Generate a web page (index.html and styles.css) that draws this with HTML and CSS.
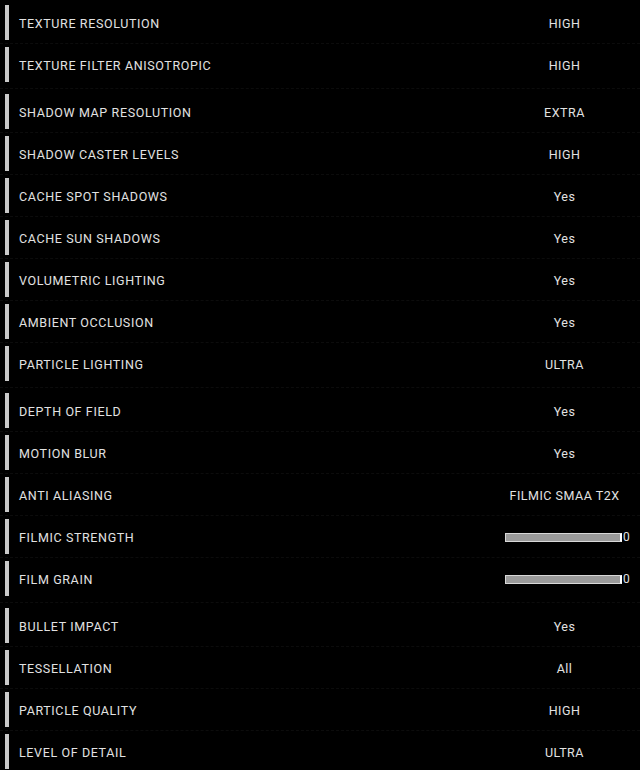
FILE: index.html
```html
<!DOCTYPE html>
<html lang="en">
<head>
    <meta charset="UTF-8">
    <meta name="viewport" content="width=device-width, initial-scale=1.0">
    <title>Advanced Graphics</title>
    <link rel="stylesheet" href="styles.css">
</head>
<body>
    <div class="settings">
        <div class="group">
            <div class="row"><span class="label">TEXTURE RESOLUTION</span><span class="value">HIGH</span></div>
            <div class="row"><span class="label">TEXTURE FILTER ANISOTROPIC</span><span class="value">HIGH</span></div>
        </div>

        <div class="group">
            <div class="row"><span class="label">SHADOW MAP RESOLUTION</span><span class="value">EXTRA</span></div>
            <div class="row"><span class="label">SHADOW CASTER LEVELS</span><span class="value">HIGH</span></div>
            <div class="row"><span class="label">CACHE SPOT SHADOWS</span><span class="value">Yes</span></div>
            <div class="row"><span class="label">CACHE SUN SHADOWS</span><span class="value">Yes</span></div>
            <div class="row"><span class="label">VOLUMETRIC LIGHTING</span><span class="value">Yes</span></div>
            <div class="row"><span class="label">AMBIENT OCCLUSION</span><span class="value">Yes</span></div>
            <div class="row"><span class="label">PARTICLE LIGHTING</span><span class="value">ULTRA</span></div>
        </div>

        <div class="group">
            <div class="row"><span class="label">DEPTH OF FIELD</span><span class="value">Yes</span></div>
            <div class="row"><span class="label">MOTION BLUR</span><span class="value">Yes</span></div>
            <div class="row"><span class="label">ANTI ALIASING</span><span class="value">FILMIC SMAA T2X</span></div>
            <div class="row">
                <span class="label">FILMIC STRENGTH</span>
                <span class="value slider-value"><span class="slider"></span><span class="num">0</span></span>
            </div>
            <div class="row">
                <span class="label">FILM GRAIN</span>
                <span class="value slider-value"><span class="slider"></span><span class="num">0</span></span>
            </div>
        </div>

        <div class="group">
            <div class="row"><span class="label">BULLET IMPACT</span><span class="value">Yes</span></div>
            <div class="row"><span class="label">TESSELLATION</span><span class="value">All</span></div>
            <div class="row"><span class="label">PARTICLE QUALITY</span><span class="value">HIGH</span></div>
            <div class="row"><span class="label">LEVEL OF DETAIL</span><span class="value">ULTRA</span></div>
        </div>
    </div>
</body>
</html>
```

FILE: styles.css
```css
html, body {
    margin: 0;
    padding: 0;
    background-color: #000;
}
body {
    font-family: Roboto, "Liberation Sans", Arial, sans-serif;
    font-size: 12.5px;
    color: #e2e2e2;
    width: 640px;
    height: 770px;
    overflow: hidden;
}
.settings {
    padding-top: 5px;
    display: flex;
    flex-direction: column;
    gap: 12px;
}
.group {
    display: flex;
    flex-direction: column;
    gap: 7px;
}
.row {
    position: relative;
    display: flex;
    align-items: center;
    height: 35px;
    margin-left: 5px;
    border-left: 4px solid #c9c9c9;
}
.row::after {
    content: "";
    position: absolute;
    left: -9px;
    right: 0;
    bottom: -4px;
    border-bottom: 1px dashed #0c0c0c;
}
.group .row:last-child::after {
    bottom: -7px;
}
.label {
    flex: 1;
    padding-left: 10px;
    padding-top: 1px;
    letter-spacing: 0.62px;
}
.value {
    width: 151px;
    padding-top: 1px;
    text-align: center;
    letter-spacing: 0.5px;
}
.slider-value {
    display: flex;
    align-items: center;
    padding-left: 16px;
    box-sizing: border-box;
}
.slider {
    display: block;
    width: 114px;
    height: 7px;
    border: 1px solid #d8d8d8;
    border-right: 2px solid #fff;
    background-color: #9a9a9a;
}
.num {
    margin-left: 1px;
    font-size: 12px;
    line-height: 10px;
}
```
